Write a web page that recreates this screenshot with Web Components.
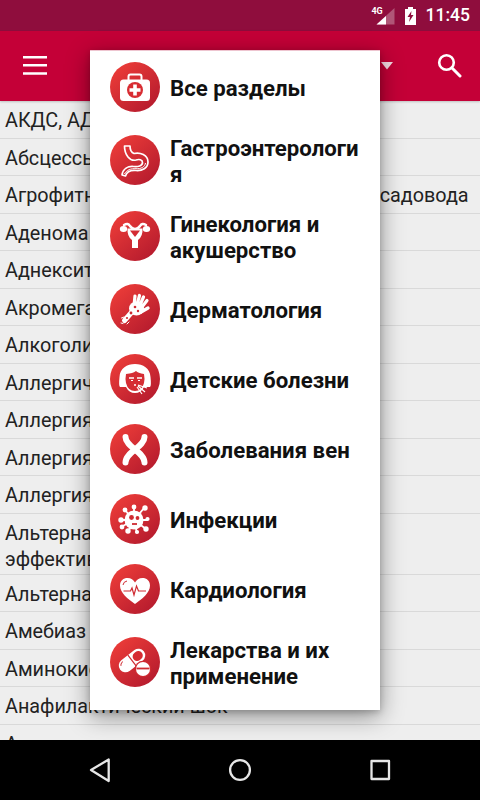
<!DOCTYPE html>
<html lang="ru"><head><meta charset="utf-8"><title>Справочник</title>
<style>
html,body{margin:0;padding:0;width:480px;height:800px;overflow:hidden;background:#eee;font-family:Roboto,"Noto Sans",sans-serif}
app-screen{color:#222}
</style></head><body>
<template id="t-screen"><style>
:host{display:flex;flex-direction:column;width:480px;height:800px;position:relative;overflow:hidden}
.main{flex:1;min-height:0;overflow:hidden;position:relative;background:#eee}
</style><slot name="status"></slot><slot name="bar"></slot><div class="main"><slot></slot></div><slot name="nav"></slot><slot name="overlay"></slot></template>

<template id="t-status"><style>
:host{display:flex;align-items:center;justify-content:flex-end;height:31px;background:#8f0d3d;color:#fff;flex:none;padding-right:10px;box-sizing:border-box;font:500 17.500px/31px Roboto,sans-serif}
.sig{position:relative;width:23px;height:17px;margin-right:10px;margin-top:1px}
.sig b{position:absolute;left:0;top:-1px;font:700 9px/9px Roboto,sans-serif;letter-spacing:-.2px}
svg{display:block}
.bat{margin-right:10px}
</style><div class="sig"><b>4G</b><svg width="23" height="17" viewBox="0 0 23 17"><path d="M22.500 0V16.500H4.500Z" fill="#fff" fill-opacity=".3"/><path d="M14 8V16.500H4.500Z" fill="#fff"/></svg></div>
<svg class="bat" width="11" height="18" viewBox="0 0 11 18"><path d="M3 0h5v2h3v16H0V2h3z" fill="#fff"/><path d="M6.500 4 2.500 10h2.500L4 15 8.500 8H6z" fill="#8f0d3d"/></svg><span>11:45</span></template>

<template id="t-bar"><style>
:host{display:flex;align-items:center;height:70px;background:#c40037;flex:none;position:relative;z-index:1;box-shadow:0 1px 2px rgba(0,0,0,.2)}
svg{display:block;position:absolute}
.m{left:23px;top:25px}.d{left:380px;top:31px}.s{left:437px;top:22px}
</style>
<svg class="m" width="24" height="19" viewBox="0 0 24 19"><path d="M0 1.200h24M0 9.300h24M0 17.500h24" stroke="#fff" stroke-width="2.500"/></svg>
<svg class="d" width="14" height="8" viewBox="0 0 14 8"><path d="M1 0h12L7 7.500z" fill="#f4d9e2"/></svg>
<svg class="s" width="25" height="25" viewBox="0 0 25 25"><circle cx="9.500" cy="9.500" r="7.300" fill="none" stroke="#fff" stroke-width="2.600"/><path d="M14.800 14.800 23 23" stroke="#fff" stroke-width="3" stroke-linecap="round"/></svg></template>

<template id="t-row"><style>
:host{display:block;box-sizing:border-box;padding:7.250px 5px 3.250px;border-bottom:1px solid #d9d9d9;font:400 19.800px/26px Roboto,sans-serif;color:#222;white-space:nowrap}
:host([two]){padding:7px 5px 1px}
</style><slot></slot></template>

<template id="t-nav"><style>
:host{display:block;height:60px;background:#000;flex:none;position:relative;z-index:3}
svg{display:block;width:480px;height:60px}
</style><svg viewBox="0 0 480 60" fill="none" stroke="#e6e6e6" stroke-width="2.300" stroke-linejoin="round"><path d="M91 30 108.700 19.500V41z"/><circle cx="240" cy="30" r="9.900"/><rect x="371.500" y="21" width="17.500" height="18"/></svg></template>

<template id="t-menu"><style>
:host{display:block;position:absolute;left:90px;top:50px;width:290px;height:660px;box-sizing:border-box;padding:1px 0 8px;border-top:1px solid #eec5d0;background:#fff;z-index:2;box-shadow:0 6px 22px rgba(0,0,0,.42),0 2px 6px rgba(0,0,0,.18);overflow:hidden}
</style><slot></slot></template>

<template id="t-item"><style>
:host{display:flex;align-items:center;box-sizing:border-box;min-height:70px;padding:0 19px 0 20px;gap:10px;font:700 22.200px/26px Roboto,sans-serif;color:#111}
.t{flex:1;min-width:0;overflow-wrap:anywhere;padding:13px 0 11px}
.i{width:50px;height:50px;flex:none;display:block}
::slotted(svg){display:block}
</style><div class="i"><slot name="icon"></slot></div><div class="t"><slot></slot></div></template>

<svg width="0" height="0" style="position:absolute"><defs><linearGradient id="rg" x1="0.150" y1="0.100" x2="0.850" y2="0.900"><stop offset="0" stop-color="#ea3b38"/><stop offset="1" stop-color="#b71c2e"/></linearGradient></defs></svg>

<app-screen>
<status-bar slot="status"></status-bar>
<app-bar slot="bar"></app-bar>
<list-row>АКДС, АДС</list-row>
<list-row>Абсцессы</list-row>
<list-row style="word-spacing:-.7px">Агрофитнес: памятка для начинающего садовода</list-row>
<list-row>Аденома</list-row>
<list-row>Аднексит</list-row>
<list-row>Акромегалия</list-row>
<list-row>Алкоголизм</list-row>
<list-row>Аллергический ринит</list-row>
<list-row>Аллергия</list-row>
<list-row>Аллергия</list-row>
<list-row>Аллергия</list-row>
<list-row two>Альтернативные методы<br>эффективны</list-row>
<list-row>Альтернативная</list-row>
<list-row>Амебиаз</list-row>
<list-row>Аминокислоты</list-row>
<list-row>Анафилактический шок</list-row>
<list-row>Анемия</list-row>
<nav-bar slot="nav"></nav-bar>
<popup-menu slot="overlay">
<menu-item>
<svg slot="icon" viewBox="0 0 50 50" width="50" height="50"><circle cx="25" cy="25" r="25" fill="url(#rg)"/><path d="M18.500 18v-3.500q0-2 2-2h9q2 0 2 2V18" fill="none" stroke="#fff" stroke-width="2"/><rect x="10" y="17.500" width="30" height="21.500" rx="3.500" fill="#fff"/><circle cx="25" cy="28" r="8" fill="#d82c32"/><path d="M25 22.500v11M19.500 28h11" stroke="#fff" stroke-width="3.600"/></svg>
Все разделы</menu-item>
<menu-item>
<svg slot="icon" viewBox="0 0 50 50" width="50" height="50"><circle cx="25" cy="25" r="25" fill="url(#rg)"/><path d="M14.500 11H20C20 15 21 17.500 24 18.500 30 17 38 20 38 27 38 33 32 36 26 35.500 21 35 17 36 15.500 41L12 40C13 33.500 18 31 23.500 31.500 28 32 32.500 31 32.500 27.500 32.500 24.500 29 24 26 25 20 26.500 14.500 20 14.500 11Z" fill="none" stroke="#fff" stroke-width="1.700" stroke-linejoin="round"/><path d="M14.500 39C16.500 35 21 33.300 26 33.700 31 34 35 32 35.500 28" fill="none" stroke="#fff" stroke-width="1"/></svg>
Гастроэнтерология</menu-item>
<menu-item>
<svg slot="icon" viewBox="0 0 50 50" width="50" height="50"><circle cx="25" cy="25" r="25" fill="url(#rg)"/><path d="M14 14q4-2.500 6 1 2 3 5 3t5-3q2-3.500 6-1" fill="none" stroke="#fff" stroke-width="2.500" stroke-linecap="round"/><ellipse cx="13.500" cy="18" rx="3.700" ry="3" fill="#fff"/><ellipse cx="36.500" cy="18" rx="3.700" ry="3" fill="#fff"/><path d="M17.500 17.500h15q.5 8-4.500 11.500v8h-6v-8q-5-3.500-4.500-11.500z" fill="#fff"/><path d="M20 19.500h10L25 26z" fill="#d32a33"/></svg>
Гинекология и акушерство</menu-item>
<menu-item>
<svg slot="icon" viewBox="0 0 50 50" width="50" height="50"><circle cx="25" cy="25" r="25" fill="url(#rg)"/><g stroke="#fff" stroke-linecap="round" fill="none"><path d="M24 22 25 12M27 21 29.500 11.500M30 21 33.500 13M32 23 37 16.500" stroke-width="3.200"/><path d="M31 28 38 24" stroke-width="3.400"/><path d="M21 29 14.500 36.500" stroke-width="5"/><path d="M11.500 34 14 33M19 38 17 40M11 39l2 .5" stroke-width="1"/></g><ellipse cx="26.500" cy="24.500" rx="7.500" ry="7" fill="#fff"/><circle cx="25" cy="23" r="1.300" fill="#cf2a31"/><circle cx="28" cy="27" r="1.200" fill="#cf2a31"/><circle cx="21" cy="29" r="1.400" fill="#cf2a31"/><circle cx="17" cy="34" r="1.100" fill="#cf2a31"/></svg>
Дерматология</menu-item>
<menu-item>
<svg slot="icon" viewBox="0 0 50 50" width="50" height="50"><circle cx="25" cy="25" r="25" fill="url(#rg)"/><path d="M10 33q-1.500-1 -.5-10C10 14 17 10 25 10s15 4 15.500 13q1 9-.5 10l-6 0q-3 6-9 6t-9-6z" fill="#fff"/><path d="M16 20q4-.5 6-1 2-.5 4-2 2 2 8 3 1 5 0 9-2 8-9 8t-9-8q-1-4 0-9z" fill="#d52d34"/><path d="M19 24h5M27 24h5M24 31h2" stroke="#fff" stroke-width="1.500"/><path d="M21 26.500h2M28 26.500h2" stroke="#fff" stroke-width="1"/><path d="M28 31l9 3M28 32l7 6M27 33l5 7" stroke="#fff" stroke-width="1.200"/></svg>
Детские болезни</menu-item>
<menu-item>
<svg slot="icon" viewBox="0 0 50 50" width="50" height="50"><circle cx="25" cy="25" r="25" fill="url(#rg)"/><path d="M15.500 13C15.500 23 34.500 28 34.500 38.500M34.500 13C34.500 23 15.500 28 15.500 38.500" fill="none" stroke="#fff" stroke-width="6" stroke-linecap="round"/></svg>
Заболевания вен</menu-item>
<menu-item>
<svg slot="icon" viewBox="0 0 50 50" width="50" height="50"><circle cx="25" cy="25" r="25" fill="url(#rg)"/><g stroke="#fff" stroke-width="1.800" fill="#fff"><path d="M24 26 24 12M24 26 35 13M24 26 38 26M24 26 36 35M24 26 27 39M24 26 18 38M24 26 11 33M24 26 11 26M24 26 14 15"/><circle cx="24" cy="13" r="1.500"/><circle cx="35" cy="14" r="1.800"/><circle cx="37.500" cy="25" r="1.200"/><circle cx="36" cy="35" r="1.800"/><circle cx="27" cy="38" r="1.200"/><circle cx="18" cy="37" r="1.800"/><circle cx="12" cy="33" r="1.500"/><circle cx="11" cy="26" r="1.800"/><circle cx="15" cy="16" r="1.500"/></g><circle cx="24" cy="26" r="9.500" fill="#fff"/><circle cx="21.500" cy="23.500" r="2.400" fill="#cf2a31"/><circle cx="27.500" cy="24" r="1.900" fill="#cf2a31"/><path d="M22 30h5" stroke="#cf2a31" stroke-width="1.800"/></svg>
Инфекции</menu-item>
<menu-item>
<svg slot="icon" viewBox="0 0 50 50" width="50" height="50"><circle cx="25" cy="25" r="25" fill="url(#rg)"/><path d="M25 40C18 35 10 29 10 21.500 10 16.500 13.500 14 17.500 14 21 14 23.500 16 25 18.500 26.500 16 29 14 32.500 14 36.500 14 40 16.500 40 21.500 40 29 32 35 25 40z" fill="#fff"/><path d="M13.500 27h7l1.500-3 2 7 2.500-9 2 5h7.500" fill="none" stroke="#cf2a31" stroke-width="1.200"/><path d="M13 21q.5-3.500 4-4" fill="none" stroke="#cf2a31" stroke-width="1"/></svg>
Кардиология</menu-item>
<menu-item>
<svg slot="icon" viewBox="0 0 50 50" width="50" height="50"><circle cx="25" cy="25" r="25" fill="url(#rg)"/><g transform="rotate(-38 22 23.500)"><rect x="7" y="16.800" width="30" height="13.400" rx="6.700" fill="#fff"/><path d="M22 16.800v13.400" stroke="#cf2a31" stroke-width="1.200"/><rect x="24" y="19" width="10.500" height="9" rx="4.500" fill="#d62c33"/><path d="M10 21q1-2 4-2.500" fill="none" stroke="#cf2a31" stroke-width="1"/></g><circle cx="33" cy="32" r="8.300" fill="#cf2a31"/><circle cx="33" cy="32" r="7" fill="#fff"/><path d="M26.500 31.500h13" stroke="#cf2a31" stroke-width="1.800"/></svg>
Лекарства и их применение</menu-item>
</popup-menu>
</app-screen>

<script>
function def(tag, tid){
  customElements.define(tag, class extends HTMLElement{
    constructor(){super();this.attachShadow({mode:'open'}).appendChild(document.getElementById(tid).content.cloneNode(true));}
  });
}
def('app-screen','t-screen');
def('status-bar','t-status');
def('app-bar','t-bar');
def('list-row','t-row');
def('nav-bar','t-nav');
def('popup-menu','t-menu');
def('menu-item','t-item');
</script>
</body></html>
